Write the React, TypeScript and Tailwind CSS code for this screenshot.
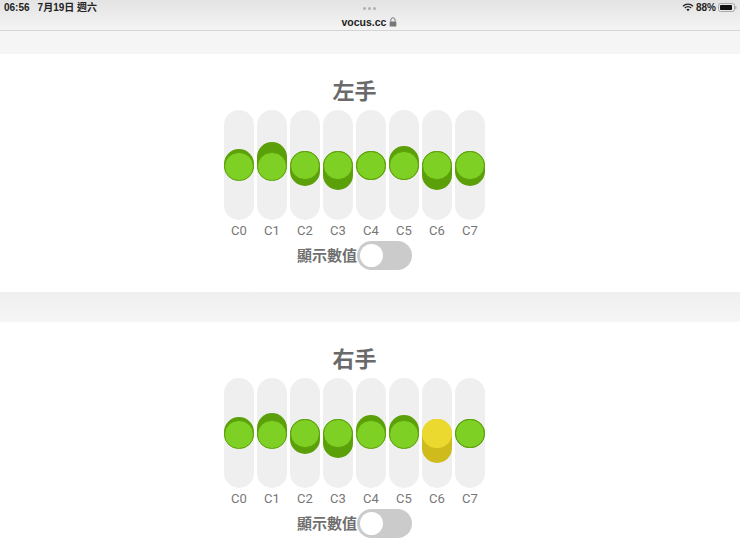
const left = [
  [149, 180, 152], [142, 180, 152], [151, 186, 151], [151, 190, 151],
  [151, 180, 151], [146, 180, 151], [151, 190, 151], [151, 186, 151],
];
const right = [
  [149, 180, 152], [145, 180, 152], [151, 186, 151], [151, 190, 151],
  [147, 180, 152], [147, 180, 152], [151, 195, 151, 1], [151, 180, 151],
];

function Fader({ name, top, bottom, cap, warn }: { name: string; top: number; bottom: number; cap: number; warn?: boolean }) {
  return (
    <div className="flex w-[30px] flex-col items-center">
      <div className="relative h-[110px] w-[30px] rounded-[15px] bg-[#efefef]">
        <div
          className={warn ? "absolute left-0 w-[30px] rounded-[15px] bg-[#cfbb1c]" : "absolute left-0 w-[30px] rounded-[15px] bg-[#5b9f09]"}
          style={{ top: top - 110, height: bottom - top }}
        />
        <div
          className={warn ? "absolute left-0 h-[29px] w-[30px] rounded-[15px] bg-[#ecd92f]" : "absolute left-0 h-[29px] w-[30px] rounded-[15px] border-[1.5px] border-[#5b9f09] bg-[#7ed024]"}
          style={{ top: cap - 110 }}
        />
      </div>
      <div className="mt-[3px] h-[15px] text-[13px] leading-[15px] text-[#777777]">{name}</div>
    </div>
  );
}

function Hand({ title, data }: { title: string; data: number[][] }) {
  return (
    <section className="flex flex-col items-center bg-white pr-[31px] pt-[23px]">
      <h2 className="h-[30px] text-[22px] font-bold leading-[30px] text-[#6a6a6a]">{title}</h2>
      <div className="mt-[3px] flex gap-[3px]">
        {data.map((d, i) => (
          <Fader key={i} name={`C${i}`} top={d[0]} bottom={d[1]} cap={d[2]} warn={d[3] === 1} />
        ))}
      </div>
      <div className="mt-[3px] flex h-[29px] items-center">
        <span className="whitespace-nowrap text-[15px] font-bold leading-[20px] text-[#6f6f6f]">顯示數值</span>
        <div className="flex h-[29px] w-[55px] items-center rounded-[15px] bg-[#cbcbcb] pl-[3px]">
          <div className="h-[23px] w-[23px] rounded-full bg-white" />
        </div>
      </div>
    </section>
  );
}

export default function App() {
  return (
    <div className="h-[555px] w-[740px] overflow-hidden bg-white font-['Roboto','Noto_Sans_CJK_TC',sans-serif]">
      <header className="relative h-[31px] border-b border-[#d4d4d4] bg-gradient-to-b from-[#e3e3e3] to-[#f4f4f4] font-['Liberation_Sans','Noto_Sans_CJK_TC',sans-serif] text-[#222222]">
        <div className="flex h-[14px] items-center justify-between pl-[4px] pr-[3px] pt-[1px]">
          <div className="flex gap-[8px] text-[10px] font-bold leading-[12px]">
            <span>06:56</span>
            <span>7月19日 週六</span>
          </div>
          <div className="flex items-center gap-[2px] text-[10px] font-bold leading-[12px]">
            <svg width="12" height="9" viewBox="0 0 12 9" className="text-[#222222]">
              <path d="M1 3.2a7 7 0 0 1 10 0M2.8 5a4.5 4.5 0 0 1 6.4 0" fill="none" stroke="currentColor" strokeWidth="1.3" />
              <path d="M4.4 6.6a2.2 2.2 0 0 1 3.2 0L6 8.3z" fill="currentColor" />
            </svg>
            <span>88%</span>
            <svg width="19" height="9" viewBox="0 0 19 9">
              <rect x="0.5" y="0.5" width="16" height="8" rx="2" fill="none" stroke="#999999" strokeWidth="0.8" />
              <rect x="2" y="2" width="12" height="5" rx="0.8" fill="#111111" />
              <rect x="17.2" y="3" width="1.2" height="3" rx="0.6" fill="#aaaaaa" />
            </svg>
          </div>
        </div>
        <div className="absolute left-[363px] top-[7px] flex gap-[2px]">
          <span className="h-[3px] w-[3px] rounded-full bg-[#b0b0b0]" />
          <span className="h-[3px] w-[3px] rounded-full bg-[#b0b0b0]" />
          <span className="h-[3px] w-[3px] rounded-full bg-[#b0b0b0]" />
        </div>
        <div className="mt-[1px] flex items-center justify-center gap-[3px] pr-[1px] text-[10.5px] font-bold leading-[14px]">
          <span>vocus.cc</span>
          <svg width="8" height="10" viewBox="0 0 7 9">
            <path d="M1.6 4V2.6a1.9 1.9 0 0 1 3.8 0V4" fill="none" stroke="#777777" strokeWidth="0.9" />
            <rect x="0.5" y="4" width="6" height="4.6" rx="0.6" fill="#777777" />
          </svg>
        </div>
      </header>
      <div className="h-[23px] bg-[#f5f5f5]" />
      <Hand title="左手" data={left} />
      <div className="mt-[22px] h-[30px] bg-gradient-to-b from-[#efefef] to-[#f6f6f6]" />
      <Hand title="右手" data={right} />
    </div>
  );
}
